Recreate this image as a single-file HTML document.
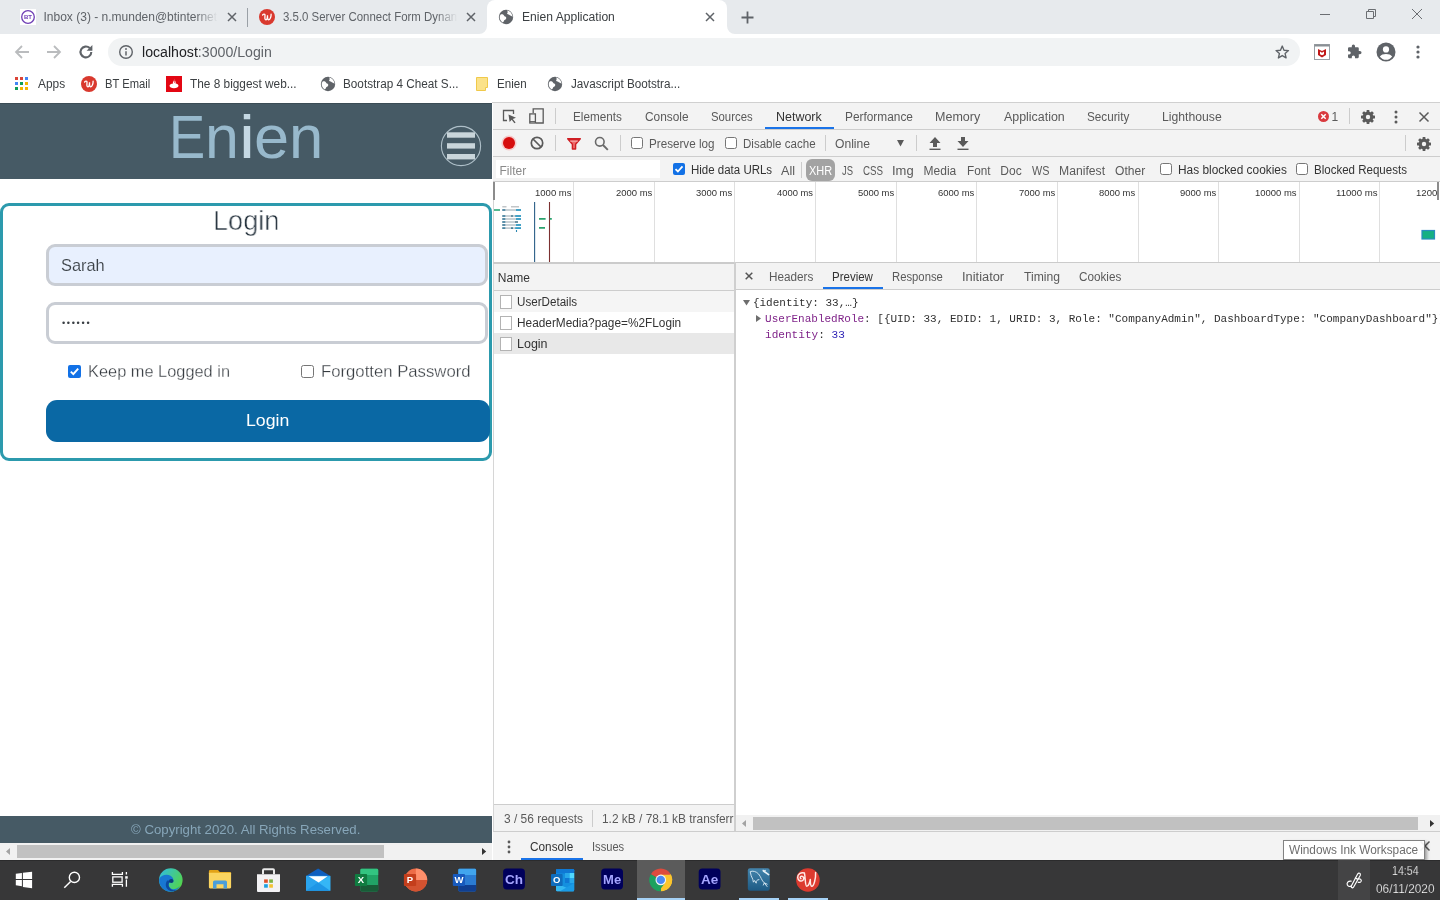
<!DOCTYPE html>
<html lang="en">
<head>
<meta charset="utf-8">
<title>Enien Application</title>
<style>
html,body{margin:0;padding:0;}
body{width:1440px;height:900px;overflow:hidden;background:#fff;font-family:"Liberation Sans",sans-serif;font-size:12px;color:#333;position:relative;}
.a{position:absolute;}
.t{position:absolute;white-space:nowrap;margin:0;padding:0;line-height:20px;transform-origin:0 50%;}
svg{position:absolute;overflow:visible;}
.m{font-family:"Liberation Mono",monospace;}
.vs{position:absolute;width:1px;background:#ccc;}
.cb{position:absolute;width:10px;height:10px;border:1px solid #767676;border-radius:2.500px;background:#fff;}
</style>
</head>
<body>
<div id="screen" style="position:absolute;left:0;top:0;width:1440px;height:900px;overflow:hidden;will-change:transform;">
<!-- ===== Browser chrome ===== -->
<div class="a" style="left:0;top:0;width:1440px;height:34px;background:#e7eaed;"></div>
<div class="a" style="left:0;top:34px;width:1440px;height:68px;background:#fff;"></div>
<!-- active tab -->
<div class="a" style="left:487px;top:0;width:240px;height:34px;background:#fff;border-radius:8px 8px 0 0;"></div>
<svg style="left:479px;top:26px" width="8" height="8" viewBox="0 0 8 8"><path d="M8 0V8H0A8 8 0 0 0 8 0Z" fill="#fff"/></svg>
<svg style="left:727px;top:26px" width="8" height="8" viewBox="0 0 8 8"><path d="M0 0V8H8A8 8 0 0 1 0 0Z" fill="#fff"/></svg>
<!-- tab 1 -->
<svg style="left:20px;top:9px" width="16" height="16" viewBox="0 0 16 16"><rect width="16" height="16" fill="#fff"/><circle cx="8" cy="8" r="6.3" fill="#fff" stroke="#6f3fb5" stroke-width="1.3"/><text x="8" y="10.2" font-family="Liberation Sans,sans-serif" font-size="6" font-weight="bold" fill="#6f3fb5" text-anchor="middle">BT</text></svg>
<span class="t" style="left:43.52px;top:7px;font-size:12px;color:#5f6368;">Inbox (3) - n.munden@btinternet</span>
<div class="a" style="left:196px;top:6px;width:24px;height:22px;background:linear-gradient(90deg,rgba(231,234,237,0),#e7eaed 90%);"></div>
<svg style="left:227px;top:12px" width="10" height="10" viewBox="0 0 10 10"><path d="M1 1L9 9M9 1L1 9" stroke="#5f6368" stroke-width="1.5" fill="none"/></svg>
<div class="a" style="left:247px;top:8px;width:1px;height:19px;background:#9aa0a6;"></div>
<!-- tab 2 -->
<svg style="left:259px;top:9px" width="16" height="16" viewBox="0 0 16 16"><circle cx="8" cy="8" r="8" fill="#d9392e"/><path d="M3.6 6.2c.2-1.5 2.4-1.6 2.4 0 0 1.4-.6 4.6.9 4.6 1.1 0 1.5-2.6 1.6-4.6 0 2 .1 4.6 1.3 4.6 1.4 0 2.4-3.4 2.3-5.6" stroke="#fff" stroke-width="1.3" fill="none" stroke-linecap="round"/></svg>
<span class="t" style="left:282.60px;top:7px;font-size:12px;color:#5f6368;transform:scaleX(0.9527);">3.5.0 Server Connect Form Dynan</span>
<div class="a" style="left:436px;top:6px;width:24px;height:22px;background:linear-gradient(90deg,rgba(231,234,237,0),#e7eaed 90%);"></div>
<svg style="left:466px;top:12px" width="10" height="10" viewBox="0 0 10 10"><path d="M1 1L9 9M9 1L1 9" stroke="#5f6368" stroke-width="1.5" fill="none"/></svg>
<!-- tab 3 (active) -->
<svg style="left:498px;top:9px" width="16" height="16" viewBox="0 0 16 16"><circle cx="8" cy="8" r="7.2" fill="#5f6368"/><path d="M3 5.2c1.4-.2 2.6.3 3 1.4.4 1.2 1.7.8 2.2 1.8.4.9-.6 2.3-1.8 2.6-.3 1-1 2-1.6 2.6C3 12.600 1.600 10.200 1.700 8 1.800 6.800 2.300 5.800 3 5.200Z" fill="#fff"/><path d="M9 1.600c.7 1 .9 1.800.3 2.500-.6.600.3 1.300 1.200 1.400 1.100.100 1.500 1.200 2.400 1.300.8.100 1.200.9 1.400 1.700.3-1.900-.5-4.600-2.700-6C10.600 1.800 9.800 1.600 9 1.600Z" fill="#fff"/></svg>
<span class="t" style="left:521.53px;top:7px;font-size:12px;color:#3c4043;transform:scaleX(1.0084);">Enien Application</span>
<svg style="left:705px;top:12px" width="10" height="10" viewBox="0 0 10 10"><path d="M1 1L9 9M9 1L1 9" stroke="#5f6368" stroke-width="1.5" fill="none"/></svg>
<!-- new tab -->
<svg style="left:741px;top:11px" width="13" height="13" viewBox="0 0 13 13"><path d="M6.500 0.500V12.500M0.500 6.500H12.500" stroke="#5f6368" stroke-width="1.8" fill="none"/></svg>
<!-- window controls -->
<svg style="left:1320px;top:9px" width="10" height="10" viewBox="0 0 10 10"><path d="M0 5.500H10" stroke="#6b6e72" stroke-width="1"/></svg>
<svg style="left:1366px;top:9px" width="10" height="10" viewBox="0 0 10 10"><path d="M0.500 2.500H7.500V9.500H0.500ZM2.500 2.500V0.500H9.500V7.500H7.500" stroke="#6b6e72" stroke-width="1" fill="none"/></svg>
<svg style="left:1412px;top:9px" width="10" height="10" viewBox="0 0 10 10"><path d="M0 0L10 10M10 0L0 10" stroke="#6b6e72" stroke-width="1" fill="none"/></svg>
<!-- toolbar -->
<svg style="left:14px;top:44px" width="16" height="16" viewBox="0 0 16 16"><path d="M15 8H2M8 2L2 8L8 14" stroke="#babcbe" stroke-width="1.800" fill="none"/></svg>
<svg style="left:46px;top:44px" width="16" height="16" viewBox="0 0 16 16"><path d="M1 8H14M8 2L14 8L8 14" stroke="#babcbe" stroke-width="1.800" fill="none"/></svg>
<svg style="left:78px;top:44px" width="16" height="16" viewBox="0 0 16 16"><path d="M13.300 8A5.400 5.400 0 1 1 11.700 4.100" stroke="#5f6368" stroke-width="2.100" fill="none"/><path d="M14.400 1V6.800H8.600Z" fill="#5f6368"/></svg>
<div class="a" style="left:108px;top:38px;width:1192px;height:28px;border-radius:14px;background:#f1f3f4;"></div>
<svg style="left:118px;top:44px" width="16" height="16" viewBox="0 0 16 16"><circle cx="8" cy="8" r="6.300" stroke="#5f6368" stroke-width="1.400" fill="none"/><path d="M8 7.200V11.400" stroke="#5f6368" stroke-width="1.500"/><circle cx="8" cy="5" r=".95" fill="#5f6368"/></svg>
<span class="t" style="left:141.58px;top:42px;font-size:14px;color:#202124;transform:scaleX(1.0105);">localhost<span style="color:#5f6368">:3000/Login</span></span>
<svg style="left:1274px;top:44px" width="16.500" height="16.500" viewBox="0 0 18 18"><path d="M9 2.200L10.900 6.800L15.800 7.200L12.100 10.400L13.200 15.200L9 12.600L4.800 15.200L5.900 10.400L2.200 7.200L7.100 6.800Z" stroke="#5f6368" stroke-width="1.500" fill="none" stroke-linejoin="round"/></svg>
<svg style="left:1314px;top:44px" width="16" height="16" viewBox="0 0 16 16"><rect x=".5" y=".5" width="15" height="15" fill="#fff" stroke="#9aa0a6"/><rect x=".5" y=".5" width="15" height="2" fill="#8a8f94"/><path d="M4 5L8 7L12 5V11L8 13.500L4 11Z" fill="#c01818"/><path d="M6 7.600L8 8.700L10 7.600V10.200L8 11.300L6 10.200Z" fill="#fff"/></svg>
<svg style="left:1344.500px;top:43.500px" width="17" height="17" viewBox="0 0 18 18"><path d="M7.200 2.200a1.700 1.700 0 0 1 3.400 0V3.400H13.400A1.200 1.200 0 0 1 14.600 4.600V7.400H15.800a1.700 1.700 0 0 1 0 3.400H14.600V13.800A1.200 1.200 0 0 1 13.400 15H10.600V13.800a1.700 1.700 0 0 0-3.400 0V15H4.400A1.200 1.200 0 0 1 3.200 13.800V11H4.400a1.700 1.700 0 0 0 0-3.400H3.200V4.600A1.200 1.200 0 0 1 4.400 3.400H7.200Z" fill="#5f6368"/></svg>
<svg style="left:1376px;top:42px" width="20" height="20" viewBox="0 0 20 20"><circle cx="10" cy="10" r="9.500" fill="#5f6368"/><circle cx="10" cy="7.400" r="3.100" fill="#fff"/><path d="M3.800 14.600C5 12.800 7.400 12 10 12s5 .8 6.200 2.600A7.600 7.600 0 0 1 3.800 14.600Z" fill="#fff"/></svg>
<svg style="left:1416px;top:44px" width="4" height="16" viewBox="0 0 4 16"><circle cx="2" cy="3" r="1.600" fill="#5f6368"/><circle cx="2" cy="8" r="1.600" fill="#5f6368"/><circle cx="2" cy="13" r="1.600" fill="#5f6368"/></svg>
<!-- bookmarks bar -->
<svg style="left:15px;top:77px" width="13" height="13" viewBox="0 0 13 13"><rect x="0" y="0" width="3" height="3" fill="#db4437"/><rect x="5" y="0" width="3" height="3" fill="#db4437"/><rect x="10" y="0" width="3" height="3" fill="#4285f4"/><rect x="0" y="5" width="3" height="3" fill="#4285f4"/><rect x="5" y="5" width="3" height="3" fill="#0f9d58"/><rect x="10" y="5" width="3" height="3" fill="#f4b400"/><rect x="0" y="10" width="3" height="3" fill="#0f9d58"/><rect x="5" y="10" width="3" height="3" fill="#f4b400"/><rect x="10" y="10" width="3" height="3" fill="#f4b400"/></svg>
<span class="t" style="left:38.30px;top:74px;font-size:12px;color:#3c4043;transform:scaleX(0.9914);">Apps</span>
<svg style="left:81px;top:76px" width="16" height="16" viewBox="0 0 16 16"><circle cx="8" cy="8" r="8" fill="#d9392e"/><path d="M3.6 6.2c.2-1.5 2.400-1.600 2.400 0 0 1.400-.6 4.600.9 4.600 1.100 0 1.500-2.600 1.600-4.600 0 2 .1 4.600 1.300 4.600 1.400 0 2.400-3.400 2.300-5.600" stroke="#fff" stroke-width="1.300" fill="none" stroke-linecap="round"/></svg>
<span class="t" style="left:104.60px;top:74px;font-size:12px;color:#3c4043;transform:scaleX(0.9326);">BT Email</span>
<svg style="left:166px;top:76px" width="16" height="16" viewBox="0 0 16 16"><rect width="16" height="16" fill="#e30613"/><path d="M8 2.500c.4 1.600 1.800 2.400 1.800 4.200 0-.9-.8-1.500-1-2.400-.6 1-.2 2 .2 2.900-.9-.6-1.700-1.700-1.400-3-.7 1-.9 2.100-.4 3.300-2.100.3-3.700 1.100-3.700 2.300 0 1.400 2 2.400 4.500 2.400s4.500-1 4.500-2.400c0-1.100-1.200-1.900-2.900-2.200C9.900 5.800 9.200 4.200 8 2.500Z" fill="#fff"/></svg>
<span class="t" style="left:190.26px;top:74px;font-size:12px;color:#3c4043;transform:scaleX(0.9862);">The 8 biggest web...</span>
<svg style="left:320px;top:76px" width="16" height="16" viewBox="0 0 16 16"><circle cx="8" cy="8" r="7.200" fill="#5f6368"/><path d="M3 5.200c1.400-.2 2.600.3 3 1.400.4 1.200 1.700.8 2.200 1.800.4.900-.6 2.300-1.800 2.600-.3 1-1 2-1.600 2.600C3 12.600 1.600 10.200 1.700 8 1.800 6.800 2.300 5.800 3 5.200Z" fill="#fff"/><path d="M9 1.600c.7 1 .9 1.800.3 2.500-.6.600.3 1.300 1.200 1.400 1.100.1 1.500 1.200 2.400 1.300.8.1 1.200.9 1.400 1.700.3-1.900-.5-4.600-2.700-6C10.600 1.800 9.800 1.600 9 1.600Z" fill="#fff"/></svg>
<span class="t" style="left:343.06px;top:74px;font-size:12px;color:#3c4043;transform:scaleX(0.9780);">Bootstrap 4 Cheat S...</span>
<svg style="left:476px;top:77px" width="12" height="14" viewBox="0 0 12 14"><path d="M.5.500H11.500V10.500H9.500V13.500H.5Z" fill="#fbe28a" stroke="#f0c94a"/></svg>
<span class="t" style="left:497.37px;top:74px;font-size:12px;color:#3c4043;transform:scaleX(0.9656);">Enien</span>
<svg style="left:547px;top:76px" width="16" height="16" viewBox="0 0 16 16"><circle cx="8" cy="8" r="7.200" fill="#5f6368"/><path d="M3 5.200c1.400-.2 2.600.3 3 1.400.4 1.200 1.700.8 2.200 1.800.4.900-.6 2.300-1.800 2.600-.3 1-1 2-1.600 2.600C3 12.600 1.600 10.200 1.700 8 1.800 6.800 2.300 5.800 3 5.200Z" fill="#fff"/><path d="M9 1.600c.7 1 .9 1.800.3 2.500-.6.600.3 1.300 1.200 1.400 1.100.1 1.500 1.200 2.400 1.300.8.1 1.200.9 1.400 1.700.3-1.900-.5-4.600-2.700-6C10.600 1.800 9.800 1.600 9 1.600Z" fill="#fff"/></svg>
<span class="t" style="left:570.62px;top:74px;font-size:12px;color:#3c4043;transform:scaleX(0.9747);">Javascript Bootstra...</span>
<!-- ===== Web page (left pane) ===== -->
<div class="a" style="left:0;top:103px;width:492px;height:76px;background:#465a65;border-top:1px solid #3b4c55;box-sizing:border-box;"></div>
<span class="t" style="left:0;top:126.700px;font-size:61.500px;color:#98b9cc;"><span style="display:inline-block;width:0;margin-left:169.16px;transform:scaleX(0.8831);transform-origin:0 50%;">E</span><span style="display:inline-block;width:0;margin-left:36.28px;transform:scaleX(0.9907);transform-origin:0 50%;">n</span><span style="display:inline-block;width:0;margin-left:33.37px;transform:scaleX(1.1743);transform-origin:0 50%;color:#c4d8e3;">i</span><span style="display:inline-block;width:0;margin-left:15.57px;transform:scaleX(1.0270);transform-origin:0 50%;">e</span><span style="display:inline-block;width:0;margin-left:35.12px;transform:scaleX(1.0021);transform-origin:0 50%;">n</span></span>
<svg style="left:440px;top:125px" width="42" height="42" viewBox="0 0 42 42"><circle cx="21" cy="21" r="19.600" fill="none" stroke="#aebfc8" stroke-width="1.100"/><rect x="7" y="7.300" width="28" height="5.400" fill="#c9d5da"/><rect x="7" y="18.200" width="28" height="5.400" fill="#c9d5da"/><rect x="7" y="29" width="28" height="5.400" fill="#c9d5da"/></svg>
<div class="a" style="left:0;top:203px;width:486px;height:252px;border:3px solid #2c9aad;border-radius:9px;background:#fff;"></div>
<span class="t" style="left:213.13px;top:210.6px;font-size:28px;color:#24313c;transform:scaleX(0.9681);-webkit-text-stroke:0.6px #fff;paint-order:fill stroke;">Login</span>
<div class="a" style="left:46px;top:244px;width:436px;height:36px;border:3px solid #c9cdd4;border-radius:9px;background:#e8f0fe;"></div>
<span class="t" style="left:60.86px;top:255.8px;font-size:17px;color:#3a4046;transform:scaleX(0.9642);-webkit-text-stroke:0.12px #e8f0fe;paint-order:fill stroke;">Sarah</span>
<div class="a" style="left:46px;top:302px;width:436px;height:36px;border:3px solid #c9cdd4;border-radius:9px;background:#fff;"></div>
<span class="t" style="left:61.88px;top:312.9px;font-size:9.200px;color:#3a3f44;letter-spacing:1.700px;">••••••</span>
<svg style="left:68px;top:365px" width="13" height="13" viewBox="0 0 13 13"><rect width="13" height="13" rx="2" fill="#1271e6"/><path d="M2.800 6.700L5.300 9.200L10.200 3.600" stroke="#fff" stroke-width="1.900" fill="none"/></svg>
<span class="t" style="left:88.49px;top:362.1px;font-size:17px;color:#363b40;transform:scaleX(0.9631);-webkit-text-stroke:0.3px #fff;paint-order:fill stroke;">Keep me Logged in</span>
<div class="cb" style="left:301px;top:365px;width:11px;height:11px;"></div>
<span class="t" style="left:321.46px;top:362.1px;font-size:17px;color:#363b40;transform:scaleX(0.9831);-webkit-text-stroke:0.3px #fff;paint-order:fill stroke;">Forgotten Password</span>
<div class="a" style="left:46px;top:400px;width:444px;height:42px;border-radius:11px;background:#0a68a4;"></div>
<span class="t" style="left:245.58px;top:411.2px;font-size:17px;color:#fff;transform:scaleX(1.0409);">Login</span>
<div class="a" style="left:0;top:816px;width:492px;height:27px;background:#465a65;"></div>
<span class="t" style="left:131.10px;top:819.5px;font-size:13.5px;color:#87a6b9;transform:scaleX(0.9787);">© Copyright 2020. All Rights Reserved.</span>
<div class="a" style="left:0;top:843px;width:492px;height:17px;background:#f1f1f1;"></div>
<div class="a" style="left:17px;top:845px;width:367px;height:13px;background:#c1c1c1;"></div>
<svg style="left:6px;top:848px" width="4" height="7" viewBox="0 0 4 7"><path d="M4 0L0 3.500L4 7Z" fill="#a3a3a3"/></svg>
<svg style="left:482px;top:848px" width="4" height="7" viewBox="0 0 4 7"><path d="M0 0L4.200 3.500L0 7Z" fill="#333"/></svg>
<!-- ===== DevTools ===== -->
<div class="a" style="left:492px;top:102px;width:948px;height:758px;background:#fff;"></div>
<div class="a" style="left:492px;top:102px;width:948px;height:1px;background:#d0d0d0;"></div>
<!-- main tab bar -->
<div class="a" style="left:493px;top:103px;width:947px;height:26px;background:#f3f3f3;"></div>
<div class="a" style="left:493px;top:129px;width:947px;height:1px;background:#cdcdcd;"></div>
<svg style="left:501px;top:108px" width="17" height="17" viewBox="0 0 17 17"><path d="M12.500 6V2.500H2.500V12.500H6" stroke="#5a5a5a" stroke-width="1.300" fill="none"/><path d="M7.500 6.500L15 9.800L11.800 10.900L14.600 14.400L13.400 15.300L10.700 11.800L8.600 14Z" fill="#5a5a5a"/></svg>
<svg style="left:528px;top:107px" width="17" height="18" viewBox="0 0 17 18"><path d="M5.200 6V1.900H15.200V16H8" stroke="#5a5a5a" stroke-width="1.300" fill="none"/><rect x="1.800" y="6.900" width="5.600" height="9.100" stroke="#5a5a5a" stroke-width="1.300" fill="none"/><path d="M1.800 14.600H7.400" stroke="#5a5a5a" stroke-width="1"/></svg>
<div class="vs" style="left:555px;top:108px;height:16px;"></div>
<span class="t" style="left:572.86px;top:107px;font-size:12px;color:#5a5a5a;transform:scaleX(0.9765);">Elements</span>
<span class="t" style="left:644.91px;top:107px;font-size:12px;color:#5a5a5a;transform:scaleX(0.9899);">Console</span>
<span class="t" style="left:711.29px;top:107px;font-size:12px;color:#5a5a5a;transform:scaleX(0.9452);">Sources</span>
<span class="t" style="left:776.00px;top:107px;font-size:12px;color:#333;transform:scaleX(1.0392);">Network</span>
<div class="a" style="left:765px;top:127px;width:69px;height:2px;background:#1a73e8;"></div>
<span class="t" style="left:844.55px;top:107px;font-size:12px;color:#5a5a5a;transform:scaleX(0.9890);">Performance</span>
<span class="t" style="left:934.80px;top:107px;font-size:12px;color:#5a5a5a;transform:scaleX(1.0430);">Memory</span>
<span class="t" style="left:1003.80px;top:107px;font-size:12px;color:#5a5a5a;transform:scaleX(1.0350);">Application</span>
<span class="t" style="left:1086.97px;top:107px;font-size:12px;color:#5a5a5a;transform:scaleX(0.9765);">Security</span>
<span class="t" style="left:1161.72px;top:107px;font-size:12px;color:#5a5a5a;transform:scaleX(1.0164);">Lighthouse</span>
<svg style="left:1318px;top:111px" width="11" height="11" viewBox="0 0 11 11"><circle cx="5.500" cy="5.500" r="5.500" fill="#d93a3f"/><path d="M3.300 3.300L7.700 7.700M7.700 3.300L3.300 7.700" stroke="#fff" stroke-width="1.500"/></svg>
<span class="t" style="left:1331.60px;top:107px;font-size:12px;color:#5a5a5a;">1</span>
<div class="vs" style="left:1349px;top:108px;height:16px;"></div>
<svg style="left:1360px;top:109px" width="16" height="16" viewBox="0 0 16 16"><g fill="#5a5a5a"><circle cx="8" cy="8" r="5.400"/><rect x="6.600" y="1" width="2.800" height="14" rx=".5"/><rect x="6.600" y="1" width="2.800" height="14" rx=".5" transform="rotate(45 8 8)"/><rect x="6.600" y="1" width="2.800" height="14" rx=".5" transform="rotate(90 8 8)"/><rect x="6.600" y="1" width="2.800" height="14" rx=".5" transform="rotate(135 8 8)"/></g><circle cx="8" cy="8" r="2.200" fill="#f3f3f3"/></svg>
<svg style="left:1394px;top:110px" width="4" height="14" viewBox="0 0 4 14"><circle cx="2" cy="2" r="1.500" fill="#5a5a5a"/><circle cx="2" cy="7" r="1.500" fill="#5a5a5a"/><circle cx="2" cy="12" r="1.500" fill="#5a5a5a"/></svg>
<svg style="left:1419px;top:112px" width="10" height="10" viewBox="0 0 10 10"><path d="M0.500 0.500L9.500 9.500M9.500 0.500L0.500 9.500" stroke="#5a5a5a" stroke-width="1.500"/></svg>
<!-- network toolbar -->
<div class="a" style="left:493px;top:130px;width:947px;height:26px;background:#f3f3f3;"></div>
<div class="a" style="left:493px;top:156px;width:947px;height:1px;background:#cdcdcd;"></div>
<svg style="left:501px;top:135px" width="16" height="16" viewBox="0 0 16 16"><circle cx="8" cy="8" r="7.600" fill="#f6c9c9"/><circle cx="8" cy="8" r="6" fill="#d60d0d"/></svg>
<svg style="left:530px;top:136px" width="14" height="14" viewBox="0 0 14 14"><circle cx="7" cy="7" r="5.700" fill="none" stroke="#5a5a5a" stroke-width="1.700"/><path d="M3 3L11 11" stroke="#5a5a5a" stroke-width="1.700"/></svg>
<div class="vs" style="left:555px;top:135px;height:16px;"></div>
<svg style="left:567px;top:138px" width="14" height="12" viewBox="0 0 14 12"><path d="M0.700 0.700H13.300L8.600 6.200V11L5.400 11V6.200Z" fill="#ee6a6a" stroke="#cf1f24" stroke-width="1.400" stroke-linejoin="round"/><path d="M0.700 0.700H13.300L12 2.400H2Z" fill="#cf1f24"/><path d="M3.200 3.100H10.800" stroke="#f7c4c4" stroke-width=".9"/></svg>
<svg style="left:594px;top:136px" width="15" height="15" viewBox="0 0 15 15"><circle cx="5.800" cy="5.800" r="4.300" fill="none" stroke="#6a6a6a" stroke-width="1.600"/><path d="M9 9L13.800 13.800" stroke="#6a6a6a" stroke-width="1.900"/></svg>
<div class="vs" style="left:620px;top:135px;height:16px;"></div>
<div class="cb" style="left:631px;top:137px;"></div>
<span class="t" style="left:648.57px;top:134px;font-size:12px;color:#5a5a5a;transform:scaleX(0.9715);">Preserve log</span>
<div class="cb" style="left:725px;top:137px;"></div>
<span class="t" style="left:742.88px;top:134px;font-size:12px;color:#5a5a5a;transform:scaleX(0.9632);">Disable cache</span>
<div class="vs" style="left:825px;top:135px;height:16px;"></div>
<span class="t" style="left:834.95px;top:134px;font-size:12px;color:#5a5a5a;transform:scaleX(1.0103);">Online</span>
<svg style="left:897.300px;top:140.200px" width="7" height="6.500" viewBox="0 0 7 6.500"><path d="M0 0H7L3.500 6.500Z" fill="#5a5a5a"/></svg>
<div class="vs" style="left:916px;top:135px;height:16px;"></div>
<svg style="left:929px;top:137px" width="12" height="13" viewBox="0 0 12 13"><path d="M6 0L11.500 6H8V10H4V6H0.500Z" fill="#5a5a5a"/><rect x="0.500" y="11.600" width="11" height="1.400" fill="#5a5a5a"/></svg>
<svg style="left:957px;top:137px" width="12" height="13" viewBox="0 0 12 13"><path d="M4 0H8V4H11.500L6 10L0.500 4H4Z" fill="#5a5a5a"/><rect x="0.500" y="11.600" width="11" height="1.400" fill="#5a5a5a"/></svg>
<div class="vs" style="left:1405px;top:135px;height:16px;"></div>
<svg style="left:1416px;top:136px" width="16" height="16" viewBox="0 0 16 16"><g fill="#5a5a5a"><circle cx="8" cy="8" r="5.400"/><rect x="6.600" y="1" width="2.800" height="14" rx=".5"/><rect x="6.600" y="1" width="2.800" height="14" rx=".5" transform="rotate(45 8 8)"/><rect x="6.600" y="1" width="2.800" height="14" rx=".5" transform="rotate(90 8 8)"/><rect x="6.600" y="1" width="2.800" height="14" rx=".5" transform="rotate(135 8 8)"/></g><circle cx="8" cy="8" r="2.200" fill="#f3f3f3"/></svg>
<!-- filter row -->
<div class="a" style="left:493px;top:157px;width:947px;height:24px;background:#f3f3f3;"></div>
<div class="a" style="left:493px;top:181px;width:947px;height:1px;background:#cdcdcd;"></div>
<div class="a" style="left:496px;top:160px;width:164px;height:18px;background:#fff;"></div>
<span class="t" style="left:499.54px;top:161px;font-size:12px;color:#8a8a8a;">Filter</span>
<svg style="left:673px;top:163px" width="12" height="12" viewBox="0 0 12 12"><rect width="12" height="12" rx="2" fill="#1271e6"/><path d="M2.500 6.200L4.900 8.500L9.500 3.300" stroke="#fff" stroke-width="1.800" fill="none"/></svg>
<span class="t" style="left:690.58px;top:159.5px;font-size:12px;color:#333;transform:scaleX(0.9576);">Hide data URLs</span>
<span class="t" style="left:781.30px;top:161px;font-size:12px;color:#5a5a5a;transform:scaleX(1.0485);">All</span>
<div class="vs" style="left:801px;top:162px;height:16px;"></div>
<div class="a" style="left:806px;top:159px;width:29px;height:22px;border-radius:6px;background:#a3a3a3;"></div>
<span class="t" style="left:809.28px;top:161px;font-size:12px;color:#fff;transform:scaleX(0.9150);">XHR</span>
<span class="t" style="left:841.86px;top:161px;font-size:12px;color:#5a5a5a;transform:scaleX(0.7883);">JS</span>
<span class="t" style="left:862.81px;top:161px;font-size:12px;color:#5a5a5a;transform:scaleX(0.8146);">CSS</span>
<span class="t" style="left:892.13px;top:161px;font-size:12px;color:#5a5a5a;transform:scaleX(1.0830);">Img</span>
<span class="t" style="left:923.54px;top:161px;font-size:12px;color:#5a5a5a;">Media</span>
<span class="t" style="left:966.56px;top:161px;font-size:12px;color:#5a5a5a;transform:scaleX(0.9775);">Font</span>
<span class="t" style="left:1000.34px;top:161px;font-size:12px;color:#5a5a5a;">Doc</span>
<span class="t" style="left:1031.80px;top:161px;font-size:12px;color:#5a5a5a;transform:scaleX(0.9030);">WS</span>
<span class="t" style="left:1058.53px;top:161px;font-size:12px;color:#5a5a5a;transform:scaleX(1.0145);">Manifest</span>
<span class="t" style="left:1114.96px;top:161px;font-size:12px;color:#5a5a5a;transform:scaleX(1.0063);">Other</span>
<div class="cb" style="left:1160px;top:163px;"></div>
<span class="t" style="left:1177.85px;top:159.5px;font-size:12px;color:#333;transform:scaleX(0.9892);">Has blocked cookies</span>
<div class="cb" style="left:1296px;top:163px;"></div>
<span class="t" style="left:1313.78px;top:159.5px;font-size:12px;color:#333;transform:scaleX(0.9608);">Blocked Requests</span>
<!-- overview -->
<div class="a" style="left:493px;top:182px;width:947px;height:80px;background:#fff;"></div>
<div class="a" style="left:573px;top:182px;width:1px;height:80px;background:#dfdfdf;"></div>
<div class="a" style="left:654px;top:182px;width:1px;height:80px;background:#dfdfdf;"></div>
<div class="a" style="left:734px;top:182px;width:1px;height:80px;background:#dfdfdf;"></div>
<div class="a" style="left:815px;top:182px;width:1px;height:80px;background:#dfdfdf;"></div>
<div class="a" style="left:896px;top:182px;width:1px;height:80px;background:#dfdfdf;"></div>
<div class="a" style="left:976px;top:182px;width:1px;height:80px;background:#dfdfdf;"></div>
<div class="a" style="left:1057px;top:182px;width:1px;height:80px;background:#dfdfdf;"></div>
<div class="a" style="left:1138px;top:182px;width:1px;height:80px;background:#dfdfdf;"></div>
<div class="a" style="left:1218px;top:182px;width:1px;height:80px;background:#dfdfdf;"></div>
<div class="a" style="left:1299px;top:182px;width:1px;height:80px;background:#dfdfdf;"></div>
<div class="a" style="left:1379px;top:182px;width:1px;height:80px;background:#dfdfdf;"></div>
<span class="t" style="left:534.89px;top:182.7px;font-size:9.300px;color:#333;transform:scaleX(1.0246);">1000 ms</span>
<span class="t" style="left:615.73px;top:182.7px;font-size:9.300px;color:#333;transform:scaleX(1.0178);">2000 ms</span>
<span class="t" style="left:696.47px;top:182.7px;font-size:9.300px;color:#333;transform:scaleX(1.0137);">3000 ms</span>
<span class="t" style="left:777.21px;top:182.7px;font-size:9.300px;color:#333;transform:scaleX(1.0097);">4000 ms</span>
<span class="t" style="left:857.62px;top:182.7px;font-size:9.300px;color:#333;transform:scaleX(1.0151);">5000 ms</span>
<span class="t" style="left:938.13px;top:182.7px;font-size:9.300px;color:#333;transform:scaleX(1.0178);">6000 ms</span>
<span class="t" style="left:1018.73px;top:182.7px;font-size:9.300px;color:#333;transform:scaleX(1.0178);">7000 ms</span>
<span class="t" style="left:1099.42px;top:182.7px;font-size:9.300px;color:#333;transform:scaleX(1.0151);">8000 ms</span>
<span class="t" style="left:1179.97px;top:182.7px;font-size:9.300px;color:#333;transform:scaleX(1.0164);">9000 ms</span>
<span class="t" style="left:1255.29px;top:182.7px;font-size:9.300px;color:#333;transform:scaleX(1.0171);">10000 ms</span>
<span class="t" style="left:1335.88px;top:182.7px;font-size:9.300px;color:#333;transform:scaleX(1.0350);">11000 ms</span>
<span class="t" style="left:1416.08px;top:182.7px;font-size:9.300px;color:#333;transform:scaleX(1.0277);">1200</span>
<div class="a" style="left:493px;top:182px;width:2px;height:18px;background:#8c8c8c;"></div>
<div class="a" style="left:1437px;top:182px;width:2px;height:18px;background:#8c8c8c;"></div>
<svg style="left:493px;top:200px" width="947" height="62" viewBox="0 0 947 62"><path d="M0.500 0V62" stroke="#d4d4d4" stroke-width="1"/><path d="M1 10H7" stroke="#2aa876" stroke-width="1.600"/><path d="M9.300 6.800H13.500M18 6.800H26" stroke="#c2c5c8" stroke-width="1.400"/><path d="M9.300 10H28" stroke="#bcc6cc" stroke-width="1.600"/><path d="M9.300 10H12.300" stroke="#3f7f9e" stroke-width="1.600"/><path d="M23 10H28" stroke="#2397c3" stroke-width="1.600"/><path d="M9.300 16H28" stroke="#bcc6cc" stroke-width="1.600"/><path d="M9.300 16H12.300" stroke="#3f7f9e" stroke-width="1.600"/><path d="M22.2 16H28" stroke="#2397c3" stroke-width="1.600"/><path d="M18 16H20" stroke="#4a7f95" stroke-width="1.600"/><path d="M9.300 19H28" stroke="#bcc6cc" stroke-width="1.600"/><path d="M9.300 19H12.300" stroke="#3f7f9e" stroke-width="1.600"/><path d="M23 19H28" stroke="#2397c3" stroke-width="1.600"/><path d="M9.300 22H25" stroke="#bcc6cc" stroke-width="1.600"/><path d="M9.300 22H12.300" stroke="#3f7f9e" stroke-width="1.600"/><path d="M22 22H25" stroke="#5a8496" stroke-width="1.600"/><path d="M9.300 25H28" stroke="#bcc6cc" stroke-width="1.600"/><path d="M9.300 25H12.300" stroke="#3f7f9e" stroke-width="1.600"/><path d="M23 25H28" stroke="#2397c3" stroke-width="1.600"/><path d="M9.300 28.1H28" stroke="#bcc6cc" stroke-width="1.600"/><path d="M9.300 28.1H12.300" stroke="#3f7f9e" stroke-width="1.600"/><path d="M22.2 28.1H28" stroke="#2397c3" stroke-width="1.600"/><path d="M18 28.1H20" stroke="#4a7f95" stroke-width="1.600"/><path d="M23.500 30V32" stroke="#2b86b0" stroke-width="1.100"/><path d="M41.600 2V62" stroke="#2c5f88" stroke-width="1.100"/><path d="M56.500 2V62" stroke="#7b3030" stroke-width="1.100"/><path d="M46 18.900H52.600M56.800 18.900H58.800M46 27.900H52" stroke="#2aa26e" stroke-width="1.700"/><rect x="929" y="30.500" width="12.500" height="8.500" fill="#16b083" stroke="#2a8cc0" stroke-width="1.200"/></svg>
<div class="a" style="left:493px;top:262px;width:241px;height:2px;background:#cbcbcb;"></div><div class="a" style="left:734px;top:262px;width:706px;height:1px;background:#cbcbcb;"></div>
<!-- request list -->
<div class="a" style="left:493px;top:264px;width:242px;height:26px;background:#f3f3f3;"></div>
<div class="a" style="left:493px;top:290px;width:242px;height:1px;background:#cdcdcd;"></div>
<span class="t" style="left:497.84px;top:267.5px;font-size:12px;color:#333;">Name</span>
<div class="a" style="left:493px;top:291px;width:242px;height:21px;background:#f5f5f5;"></div>
<div class="a" style="left:500px;top:295px;width:10px;height:12px;border:1px solid #b3b3b3;background:#fff;"></div>
<span class="t" style="left:516.63px;top:291.5px;font-size:12px;color:#333;transform:scaleX(0.9688);">UserDetails</span>
<div class="a" style="left:493px;top:312px;width:242px;height:21px;background:#fff;"></div>
<div class="a" style="left:500px;top:316px;width:10px;height:12px;border:1px solid #b3b3b3;background:#fff;"></div>
<span class="t" style="left:516.55px;top:312.5px;font-size:12px;color:#333;transform:scaleX(0.9863);">HeaderMedia?page=%2FLogin</span>
<div class="a" style="left:493px;top:333px;width:242px;height:21px;background:#e8e8e8;"></div>
<div class="a" style="left:500px;top:337px;width:10px;height:12px;border:1px solid #b3b3b3;background:#fff;"></div>
<span class="t" style="left:516.50px;top:333.5px;font-size:12px;color:#333;transform:scaleX(1.0409);">Login</span>
<div class="a" style="left:734px;top:262px;width:2px;height:569px;background:#cfcfcf;"></div>
<!-- detail pane -->
<div class="a" style="left:736px;top:263px;width:704px;height:26px;background:#f3f3f3;"></div>
<div class="a" style="left:736px;top:289px;width:704px;height:1px;background:#cdcdcd;"></div>
<svg style="left:745px;top:272px" width="8" height="8" viewBox="0 0 8 8"><path d="M0.700 0.700L7.300 7.300M7.300 0.700L0.700 7.300" stroke="#555" stroke-width="1.500"/></svg>
<span class="t" style="left:769.06px;top:267px;font-size:12px;color:#5a5a5a;transform:scaleX(0.9778);">Headers</span>
<span class="t" style="left:832.08px;top:267px;font-size:12px;color:#333;transform:scaleX(0.9580);">Preview</span>
<span class="t" style="left:892.10px;top:267px;font-size:12px;color:#5a5a5a;transform:scaleX(0.9414);">Response</span>
<span class="t" style="left:961.84px;top:267px;font-size:12px;color:#5a5a5a;transform:scaleX(1.0704);">Initiator</span>
<span class="t" style="left:1024.06px;top:267px;font-size:12px;color:#5a5a5a;transform:scaleX(1.0119);">Timing</span>
<span class="t" style="left:1079.41px;top:267px;font-size:12px;color:#5a5a5a;transform:scaleX(0.9756);">Cookies</span>
<div class="a" style="left:823px;top:287px;width:60px;height:2px;background:#1a73e8;"></div>
<svg style="left:743px;top:300px" width="7" height="5.500" viewBox="0 0 7 5.500"><path d="M0 0H7L3.500 5.500Z" fill="#6e6e6e"/></svg>
<span class="t" style="left:752.89px;top:293px;font-size:11px;color:#303030;font-family:'Liberation Mono',monospace;">&#123;identity: 33,…&#125;</span>
<svg style="left:756.300px;top:314.700px" width="5" height="7" viewBox="0 0 5 7"><path d="M0 0V7L5 3.500Z" fill="#6e6e6e"/></svg>
<span class="t" style="left:765.08px;top:308.7px;font-size:11px;color:#303030;font-family:'Liberation Mono',monospace;"><span style="color:#80258a">UserEnabledRole</span>: [&#123;UID: 33, EDID: 1, URID: 3, Role: "CompanyAdmin", DashboardType: "CompanyDashboard"&#125;]</span>
<span class="t" style="left:765.08px;top:325px;font-size:11px;color:#303030;transform:scaleX(1.0072);font-family:'Liberation Mono',monospace;"><span style="color:#80258a">identity</span>: <span style="color:#2a1fb4">33</span></span>
<!-- status bar -->
<div class="a" style="left:493px;top:804px;width:241px;height:1px;background:#cdcdcd;"></div>
<div class="a" style="left:493px;top:805px;width:241px;height:26px;background:#f3f3f3;"></div>
<span class="t" style="left:503.88px;top:808.5px;font-size:12px;color:#5a5a5a;transform:scaleX(0.9956);">3 / 56 requests</span>
<div class="vs" style="left:592px;top:810px;height:17px;"></div>
<span class="t" style="left:601.61px;top:808.5px;font-size:12px;color:#5a5a5a;transform:scaleX(0.9911);">1.2 kB / 78.1 kB transferr</span>
<div class="a" style="left:736px;top:815px;width:704px;height:16px;background:#f1f1f1;"></div>
<div class="a" style="left:753px;top:817px;width:665px;height:13px;background:#c1c1c1;"></div>
<svg style="left:742px;top:820px" width="4" height="7" viewBox="0 0 4 7"><path d="M4 0L0 3.500L4 7Z" fill="#a3a3a3"/></svg>
<svg style="left:1430px;top:820px" width="4" height="7" viewBox="0 0 4 7"><path d="M0 0L4.200 3.500L0 7Z" fill="#333"/></svg>
<!-- drawer -->
<div class="a" style="left:493px;top:831px;width:947px;height:1px;background:#cdcdcd;"></div>
<div class="a" style="left:493px;top:832px;width:947px;height:28px;background:#f3f3f3;"></div>
<div class="a" style="left:493px;top:264px;width:1px;height:567px;background:#d6d6d6;"></div>
<svg style="left:507px;top:840px" width="4" height="14" viewBox="0 0 4 14"><circle cx="2" cy="2" r="1.400" fill="#5a5a5a"/><circle cx="2" cy="7" r="1.400" fill="#5a5a5a"/><circle cx="2" cy="12" r="1.400" fill="#5a5a5a"/></svg>
<span class="t" style="left:530.21px;top:837px;font-size:12px;color:#333;transform:scaleX(0.9829);">Console</span>
<div class="a" style="left:521px;top:858px;width:62px;height:2px;background:#1a73e8;"></div>
<span class="t" style="left:592.00px;top:837px;font-size:12px;color:#5a5a5a;transform:scaleX(0.9282);">Issues</span>
<svg style="left:1420px;top:841px" width="10" height="10" viewBox="0 0 10 10"><path d="M0.500 0.500L9.500 9.500M9.500 0.500L0.500 9.500" stroke="#5a5a5a" stroke-width="1.500"/></svg>
<div class="a" style="left:1283px;top:840px;width:140px;height:18px;background:rgba(255,255,255,.93);border:1px solid #828282;box-shadow:2px 2px 3px rgba(0,0,0,.35);"></div>
<span class="t" style="left:1289.30px;top:840px;font-size:12px;color:#6e6e6e;transform:scaleX(0.9850);">Windows Ink Workspace</span>
<!-- ===== Windows taskbar ===== -->
<div class="a" style="left:0;top:860px;width:1440px;height:40px;background:#373738;border-top:1px solid #2b2b2c;box-sizing:border-box;"></div>
<div class="a" style="left:637px;top:860px;width:48px;height:40px;background:#5b5b5b;"></div>
<div class="a" style="left:637px;top:898px;width:48px;height:2px;background:#a6d2f6;"></div>
<div class="a" style="left:739px;top:898px;width:40px;height:2px;background:#a6d2f6;"></div>
<div class="a" style="left:788px;top:898px;width:40px;height:2px;background:#a6d2f6;"></div>
<div class="a" style="left:1338px;top:860px;width:32px;height:40px;background:#444445;"></div>
<svg style="left:0;top:860px" width="1440" height="40" viewBox="0 0 1440 40">
<defs><linearGradient id="gE" x1="0" y1="0" x2="1" y2="0.600"><stop offset="0" stop-color="#2fbbe6"/><stop offset="1" stop-color="#52d44f"/></linearGradient><linearGradient id="gM" x1="0" y1="0" x2="0" y2="1"><stop offset="0" stop-color="#4485ad"/><stop offset="1" stop-color="#1d5a84"/></linearGradient></defs>
<path d="M15.800 13.700L21.900 12.900V18.900H15.800ZM22.900 12.700L32.100 11.700V18.900H22.900ZM15.800 19.900H21.900V26.200L15.800 25.300ZM22.900 19.900H32.100V28.250L22.900 26.900Z" fill="#fff"/>
<circle cx="74.400" cy="17.400" r="5.100" fill="none" stroke="#fff" stroke-width="1.400"/><path d="M70.600 21.500L64.300 27.700" stroke="#fff" stroke-width="1.500"/>
<path d="M112.400 12V14.300H122.400V12M112.400 26.700V24.400H122.400V26.700M126.400 12V14.500M126.400 19.500V26.700" stroke="#fff" stroke-width="1.300" fill="none"/><rect x="112.800" y="16.900" width="9.300" height="5.300" fill="none" stroke="#fff" stroke-width="1.300"/><rect x="125.200" y="16.200" width="2.500" height="2.500" fill="#fff"/>
<g transform="translate(159 8.200)"><circle cx="11.800" cy="11.800" r="11.800" fill="url(#gE)"/><path d="M0.200 10.500C2.500 6.500 8 5.500 11.500 7.500 14 9 15 11.500 14 13.500 12 13 9.500 14.500 9.700 17 10 20 13.500 21.800 17 20.500 18.500 20 20 19 21 17.800 19 21.500 15.500 23.600 11.800 23.600 5 23.600 -.6 17.500 0.200 10.500Z" fill="#1877d2"/><path d="M8 12.500C6 15.500 6.500 19.500 9.500 21.800 12 23.600 15.500 23.500 18 22 15 22.500 11 21.500 9.800 18 9.200 16 9.800 14 11.500 13.200 10.500 12.300 9 12.200 8 12.500Z" fill="#0c4a9e"/><ellipse cx="12.300" cy="12.800" rx="2.300" ry="2" fill="#0a3d7d"/></g>
<path d="M208.900 11.200a1.200 1.200 0 0 1 1.200 -1.200H218l1.800 2H230a1.100 1.100 0 0 1 1.100 1.100V14H208.900Z" fill="#e3a317"/><path d="M208.900 12.800H231.100V27.300a1.100 1.100 0 0 1 -1.100 1.100H210a1.100 1.100 0 0 1 -1.100 -1.100Z" fill="#fbd560"/><path d="M213 28.400V22a1.600 1.600 0 0 1 1.600 -1.600H225.400a1.600 1.600 0 0 1 1.600 1.600V28.400H223.500V24.200H216.500V28.400Z" fill="#4b9fd9"/>
<path d="M263 14.200V10.300a1 1 0 0 1 1 -1H273a1 1 0 0 1 1 1V14.200" fill="none" stroke="#e9e9e9" stroke-width="2"/><path d="M257 14.200H280V31a1 1 0 0 1 -1 1H258a1 1 0 0 1 -1 -1Z" fill="#f3f2f4"/><rect x="264.100" y="19.400" width="3.700" height="3.400" fill="#e0522a"/><rect x="269.200" y="19.400" width="3.700" height="3.400" fill="#7cb342"/><rect x="264.100" y="24.200" width="3.700" height="3.500" fill="#1ba1e2"/><rect x="269.200" y="24.200" width="3.700" height="3.500" fill="#f2c232"/>
<path d="M306 15.900L318.100 8.500L330.300 15.900Z" fill="#0f5fbe"/><rect x="306" y="15.800" width="24.300" height="15" fill="#2aa4ee"/><path d="M318 22.500L330.300 30.800H306Z" fill="#1e96e6"/><path d="M318.500 22.200L330.300 15.900V30.800Z" fill="#35b6f6"/><path d="M308.600 16.200H327.700L318.600 22.600Z" fill="#fff"/>
<rect x="360.4" y="8.800" width="17.800" height="22.600" rx="1.300" fill="#21a366"/><path d="M360.4 10.100a1.300 1.300 0 0 1 1.300 -1.300H376.9a1.300 1.300 0 0 1 1.300 1.300V15H360.4Z" fill="#33c481"/><path d="M360.4 25H378.2V30.100a1.300 1.300 0 0 1 -1.300 1.300H361.7a1.300 1.300 0 0 1 -1.300 -1.300Z" fill="#185c37"/><rect x="354.9" y="13.900" width="12.200" height="12.200" rx="1" fill="#107c41"/><text x="361.0" y="23.400" font-family="Liberation Sans,sans-serif" font-size="9.500" font-weight="bold" fill="#fff" text-anchor="middle">X</text>
<circle cx="415.8" cy="20" r="11.400" fill="#ed6c47"/><path d="M415.8 8.600A11.400 11.400 0 0 1 427.2 20H415.8Z" fill="#ff8f6b"/><path d="M404.4 20H427.2A11.400 11.400 0 0 1 404.4 20Z" fill="#d35230"/><rect x="403.9" y="13.900" width="12.200" height="12.200" rx="1" fill="#c43e1c"/><text x="410.0" y="23.400" font-family="Liberation Sans,sans-serif" font-size="9.500" font-weight="bold" fill="#fff" text-anchor="middle">P</text>
<rect x="458.3" y="8.800" width="17.800" height="22.600" rx="1.300" fill="#2b7cd3"/><path d="M458.3 10.100a1.300 1.300 0 0 1 1.300 -1.300H474.8a1.300 1.300 0 0 1 1.300 1.300V15H458.3Z" fill="#41a5ee"/><path d="M458.3 25H476.1V30.100a1.300 1.300 0 0 1 -1.300 1.300H459.6a1.300 1.300 0 0 1 -1.300 -1.300Z" fill="#103f91"/><rect x="452.8" y="13.900" width="12.200" height="12.200" rx="1" fill="#185abd"/><text x="458.9" y="23.400" font-family="Liberation Sans,sans-serif" font-size="9.500" font-weight="bold" fill="#fff" text-anchor="middle">W</text>
<rect x="503.1" y="8.400" width="21.800" height="21" rx="3.600" fill="#00005b"/><text x="514.0" y="23.500" font-family="Liberation Sans,sans-serif" font-size="13.5" font-weight="bold" fill="#a5a5ff" text-anchor="middle">Ch</text>
<rect x="556" y="8.900" width="18.200" height="22.300" rx="1.300" fill="#1490df"/><rect x="556" y="8.900" width="18.200" height="4.500" rx="1.300" fill="#0f78d4"/><rect x="565" y="13" width="4.600" height="5" fill="#28a8ea"/><rect x="569.600" y="13" width="4.600" height="5" fill="#50d9ff"/><rect x="565" y="18" width="4.600" height="5" fill="#0f78d4"/><rect x="569.600" y="18" width="4.600" height="5" fill="#28a8ea"/><path d="M556 23L574.200 31.200H557.300a1.300 1.300 0 0 1 -1.300 -1.300Z" fill="#35b8f1"/><path d="M574.200 23V29.900a1.300 1.300 0 0 1 -1.300 1.300H560Z" fill="#1a9be6"/><rect x="551" y="13.900" width="11.600" height="12.200" rx="1" fill="#0f6cbd"/><text x="556.800" y="23.300" font-family="Liberation Sans,sans-serif" font-size="9.500" font-weight="bold" fill="#fff" text-anchor="middle">O</text>
<rect x="601.2" y="8.400" width="21.800" height="21" rx="3.600" fill="#00005b"/><text x="612.1" y="23.500" font-family="Liberation Sans,sans-serif" font-size="13" font-weight="bold" fill="#a5a5ff" text-anchor="middle">Me</text>
<path d="M660.8 19.9L650.93 14.20A11.4 11.4 0 0 1 670.67 14.20Z" fill="#dd4b3e"/><path d="M660.8 19.9L670.67 14.20A11.4 11.4 0 0 1 660.80 31.30Z" fill="#fbc52d"/><path d="M660.8 19.9L660.80 31.30A11.4 11.4 0 0 1 650.93 14.20Z" fill="#1da15f"/><path d="M660.8 14.7H671.0A11.4 11.4 0 0 1 666.15 29.97L665.30 22.50Z" fill="#fbc52d"/><path d="M656.30 22.50L650.47 15.08A11.4 11.4 0 0 0 658.82 31.13L665.30 22.50Z" fill="#1da15f"/><circle cx="660.8" cy="19.9" r="5.300" fill="#f4f4f4"/><circle cx="660.8" cy="19.9" r="4.200" fill="#4a8af4"/>
<rect x="698.7" y="8.400" width="21.800" height="21" rx="3.600" fill="#00005b"/><text x="709.6" y="23.500" font-family="Liberation Sans,sans-serif" font-size="13.5" font-weight="bold" fill="#a5a5ff" text-anchor="middle">Ae</text>
<rect x="747.800" y="8.300" width="22" height="22.500" rx="2.200" fill="url(#gM)"/><path d="M750.200 11.700C752.500 10.500 756.300 11.400 758.600 14C761 16.800 761.600 20.600 764.300 22.900L767.500 24.300M764.300 22.900L767.300 26.800M764.300 22.900L763.200 25.400M750.200 11.700C750.600 14.300 751.500 17 752.800 19.400L753.400 22.200L754.600 20.500L756.200 23.200C756 21 757 19.600 759.300 19.600" fill="none" stroke="#dcecf5" stroke-width=".9" stroke-linejoin="round"/><path d="M763.500 11L768.600 14.600" stroke="#e6f0f6" stroke-width="1.700" stroke-linecap="round"/><path d="M762.700 9.900L764.200 11.500L765.600 10.200" fill="none" stroke="#e6f0f6" stroke-width="1.100"/>
<circle cx="807.900" cy="20" r="11.800" fill="#dc3a2f"/><path d="M804.400 13.100C801 12.200 797.500 14 797.700 17.500C797.900 20.500 801 22.200 803 20.200C804.500 18.600 803.500 16 801.500 16.200C800 16.400 799.800 18.300 801 18.800M804.400 13.100C805.500 17 805 26.300 806.800 26.300C808.500 26.300 810 22 810.300 19.400C810.300 22 810.500 26.300 811.900 26.300C813.800 26.300 816 18 815.600 12.400" fill="none" stroke="#ffe9e6" stroke-width="1.500" stroke-linecap="round" stroke-linejoin="round"/>
<g fill="none" stroke="#fff" stroke-width="1.300" stroke-linecap="round" transform="translate(1354 20.300) scale(.9) translate(-1354 -18.800)"><path d="M1358.200 11.600C1359.300 10 1361.700 11.200 1361 13.100L1353.600 26.300C1352.800 27.800 1350.500 27 1351 25.200Z"/><path d="M1355.500 16.200L1357.800 17.500"/><path d="M1350.800 19.800C1347.500 19.300 1345.600 21.800 1346.600 24C1347.400 25.700 1349.500 26.100 1350.800 25.200"/><path d="M1358.600 17.400C1361 16.500 1362.800 18.300 1361.800 20.100C1361.200 21.100 1359.800 21.300 1358.600 20.900"/></g>
</svg>
<span class="t" style="left:1391.50px;top:860.8px;font-size:12px;color:#fff;transform:scaleX(0.8884);-webkit-text-stroke:0.25px #373738;paint-order:fill stroke;">14:54</span>
<span class="t" style="left:1375.78px;top:878.6px;font-size:12px;color:#fff;transform:scaleX(0.9895);-webkit-text-stroke:0.25px #373738;paint-order:fill stroke;">06/11/2020</span>
</div>
</body>
</html>
